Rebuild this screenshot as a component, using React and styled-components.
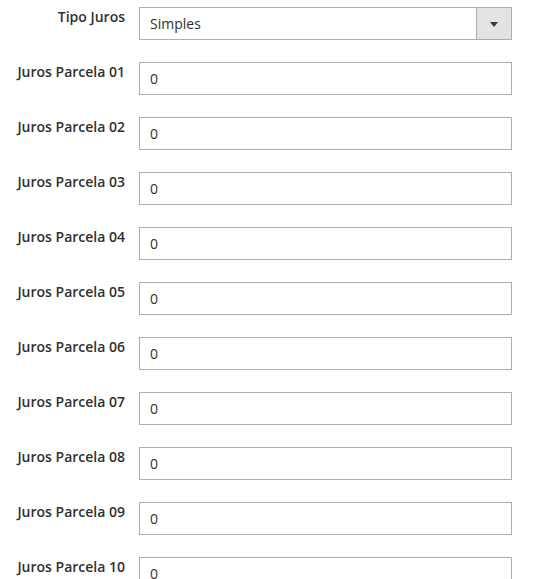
import React from 'react';
import styled, { createGlobalStyle } from 'styled-components';

const GlobalStyle = createGlobalStyle`
    body {
        margin: 0;
        background: #fff;
        font-family: "Open Sans", "Liberation Sans", sans-serif;
        color: #303030;
    }
`;

const Form = styled.div`
    display: flex;
    flex-direction: column;
    gap: 22px;
    padding: 7px 0 0 0;
    width: 512px;
`;

const Row = styled.div`
    display: grid;
    grid-template-columns: 125px 373px;
    column-gap: 14px;
    align-items: start;
`;

const Label = styled.label`
    text-align: right;
    font-size: 14px;
    font-weight: 600;
    line-height: 19px;
    color: #303030;
    white-space: nowrap;
`;

const Field = styled.div`
    box-sizing: border-box;
    height: 33px;
    border: 1px solid #adadad;
    background: #fff;
    display: flex;
    align-items: center;
    font-size: 14px;
    line-height: 19px;
    color: #303030;
`;

const Value = styled.span`
    flex: 1;
    padding-left: 10px;
`;

const ArrowBox = styled.span`
    width: 34px;
    align-self: stretch;
    border-left: 1px solid #adadad;
    background: #e3e3e3;
    display: flex;
    align-items: center;
    justify-content: center;
`;

const Caret = styled.span`
    width: 0;
    height: 0;
    border-left: 4px solid transparent;
    border-right: 4px solid transparent;
    border-top: 5px solid #41362f;
    margin-top: 1px;
`;

const parcelas = ['01', '02', '03', '04', '05', '06', '07', '08', '09', '10'];

export default function App() {
    return (
        <>
            <GlobalStyle />
            <Form>
                <Row>
                    <Label>Tipo Juros</Label>
                    <Field>
                        <Value>Simples</Value>
                        <ArrowBox><Caret /></ArrowBox>
                    </Field>
                </Row>
                {parcelas.map((n) => (
                    <Row key={n}>
                        <Label>Juros Parcela {n}</Label>
                        <Field>
                            <Value>0</Value>
                        </Field>
                    </Row>
                ))}
            </Form>
        </>
    );
}
